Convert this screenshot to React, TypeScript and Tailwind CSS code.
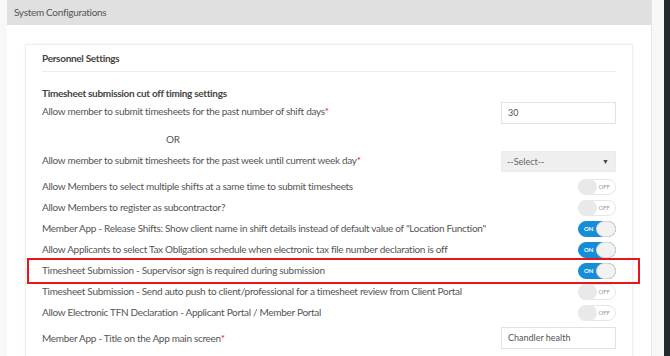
import React from "react";

const font = { fontFamily: "Lato, 'Open Sans', sans-serif" };

function Toggle({ on }: { on: boolean }) {
  if (on) {
    return (
      <div className="w-[38px] h-[16px] rounded-full bg-[#168dd9] border border-[#168dd9] flex items-center justify-between pl-[5px] shrink-0">
        <span className="text-[6px] font-bold text-white leading-none tracking-normal">ON</span>
        <div className="w-[20px] h-[16px] rounded-full bg-[#f2f2f2] border border-[#d8d8d8] -mr-px" />
      </div>
    );
  }
  return (
    <div className="w-[38px] h-[16px] rounded-full bg-white border border-[#e6e6e6] flex items-center justify-between pr-[5px] shrink-0">
      <div className="w-[19px] h-[16px] rounded-full bg-[#e9e9e9] -ml-px" />
      <span className="text-[6px] text-[#9a9a9a] leading-none tracking-normal">OFF</span>
    </div>
  );
}

function Req() {
  return <span className="text-[#e0202a]">*</span>;
}

function ToggleRow({ label, on, highlight }: { label: React.ReactNode; on: boolean; highlight?: boolean }) {
  return (
    <div className="relative h-[21px] flex items-center justify-between">
      <span className="whitespace-nowrap">{label}</span>
      <div className="w-[115px] flex justify-end">
        <Toggle on={on} />
      </div>
      {highlight && (
        <div className="absolute -left-[15px] -right-[24px] -top-[2px] -bottom-[3px] border-2 border-[#e8161b]" />
      )}
    </div>
  );
}

export default function App() {
  return (
    <div
      className="w-[670px] h-[356px] bg-[#f8f8f8] flex overflow-hidden text-[#555] text-[10px] tracking-[-0.3px]"
      style={font}
    >
      <div className="ml-[7px] w-[645px] flex flex-col bg-white border-r border-[#e6e6e6] shrink-0">
        <div className="h-[25px] shrink-0 bg-[#e0e0e0] pl-[7px] flex items-center text-[#555]">System Configurations</div>
        <div className="pt-[19px] px-[18px] shrink-0">
          <div className="bg-white border border-[#efefef] shadow-[0_0_3px_rgba(0,0,0,0.06)] px-[16px] pt-[6px] pb-[10px]">
            <div className="h-[14px] flex items-center font-bold text-[#444]">Personnel Settings</div>
            <div className="mt-[6px] border-t border-[#ececec]" />
            <div className="mt-[13px] h-[16px] flex items-center font-bold text-[#444]">
              Timesheet submission cut off timing settings
            </div>
            <div className="mt-[1px] h-[22px] flex items-center justify-between">
              <span className="-mt-[3px] whitespace-nowrap">
                Allow member to submit timesheets for the past number of shift days<Req />
              </span>
              <div className="w-[115px] h-[22px] border border-[#e2e2e2] flex items-center pl-[6px] text-[9px] text-[#555] tracking-normal">
                30
              </div>
            </div>
            <div className="mt-[7px] h-[16px] flex items-center">
              <span className="ml-[124px]">OR</span>
            </div>
            <div className="mt-[4px] h-[21px] flex items-center justify-between">
              <span className="-mt-[2px] whitespace-nowrap">
                Allow member to submit timesheets for the past week until current week day<Req />
              </span>
              <div className="w-[115px] h-[21px] bg-[#efefef] border border-[#ebebeb] flex items-center justify-between pl-[5px] pr-[6px] text-[9px] text-[#666] tracking-normal">
                <span>--Select--</span>
                <span className="text-[7px] text-[#444]">▼</span>
              </div>
            </div>
            <div className="mt-[4px]">
              <ToggleRow label="Allow Members to select multiple shifts at a same time to submit timesheets" on={false} />
              <ToggleRow label="Allow Members to register as subcontractor?" on={false} />
              <ToggleRow
                label={'Member App - Release Shifts: Show client name in shift details instead of default value of "Location Function"'}
                on={true}
              />
              <ToggleRow
                label="Allow Applicants to select Tax Obligation schedule when electronic tax file number declaration is off"
                on={true}
              />
              <ToggleRow label="Timesheet Submission - Supervisor sign is required during submission" on={true} highlight />
              <ToggleRow
                label="Timesheet Submission - Send auto push to client/professional for a timesheet review from Client Portal"
                on={false}
              />
              <ToggleRow label="Allow Electronic TFN Declaration - Applicant Portal / Member Portal" on={false} />
            </div>
            <div className="mt-[4px] h-[22px] flex items-center justify-between">
              <span className="whitespace-nowrap">
                Member App - Title on the App main screen<Req />
              </span>
              <div className="w-[115px] h-[22px] border border-[#e2e2e2] flex items-center pl-[6px] text-[9px] text-[#555] tracking-normal">
                Chandler health
              </div>
            </div>
          </div>
        </div>
      </div>
      <div className="ml-auto w-[6px] bg-[#262a2e]" />
    </div>
  );
}
